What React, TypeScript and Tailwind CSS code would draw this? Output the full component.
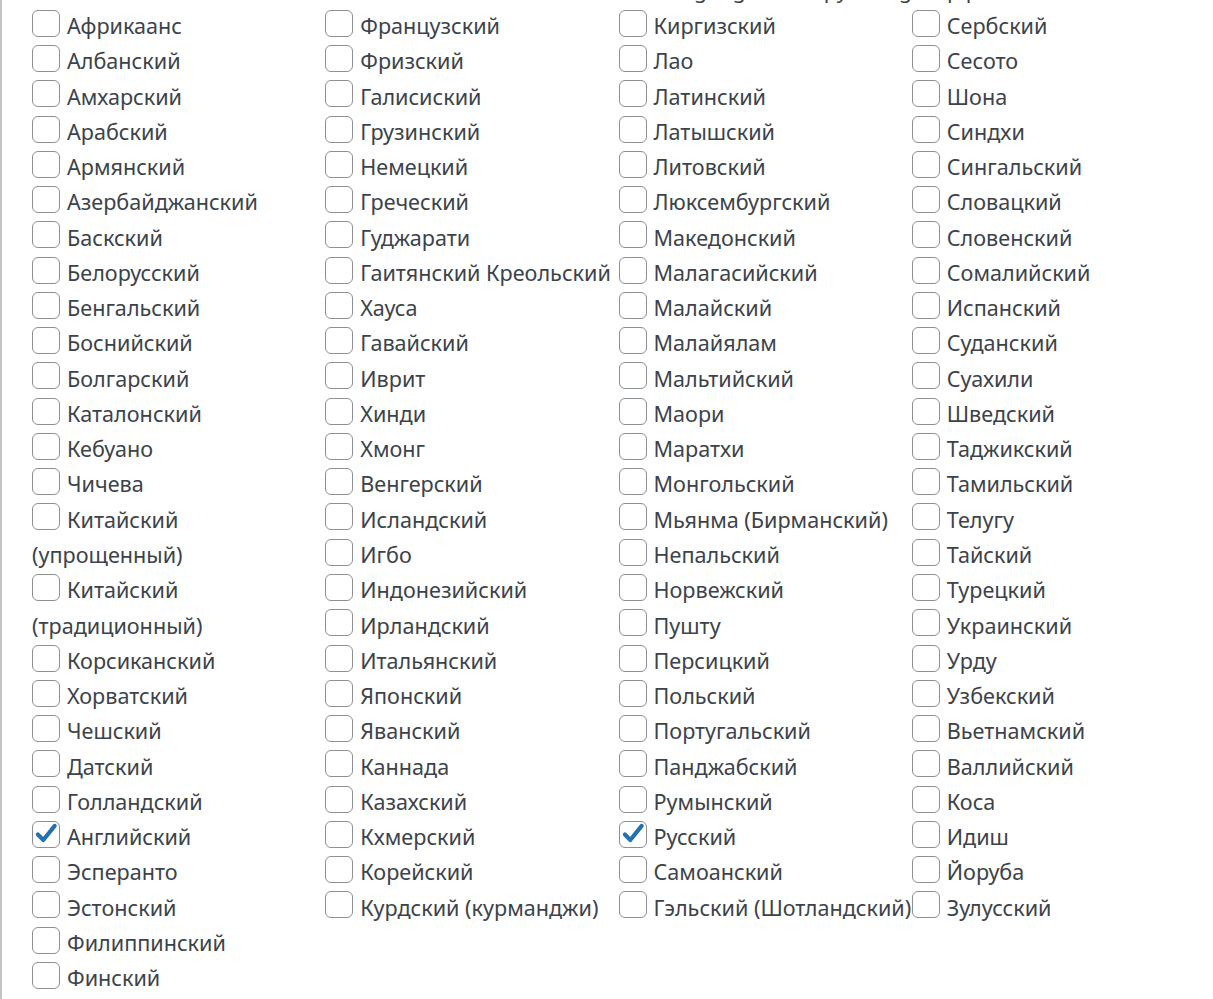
import React from "react";

const columns: { name: string; checked?: boolean }[][] = [
  [
    { name: "Африкаанс" },
    { name: "Албанский" },
    { name: "Амхарский" },
    { name: "Арабский" },
    { name: "Армянский" },
    { name: "Азербайджанский" },
    { name: "Баскский" },
    { name: "Белорусский" },
    { name: "Бенгальский" },
    { name: "Боснийский" },
    { name: "Болгарский" },
    { name: "Каталонский" },
    { name: "Кебуано" },
    { name: "Чичева" },
    { name: "Китайский (упрощенный)" },
    { name: "Китайский (традиционный)" },
    { name: "Корсиканский" },
    { name: "Хорватский" },
    { name: "Чешский" },
    { name: "Датский" },
    { name: "Голландский" },
    { name: "Английский", checked: true },
    { name: "Эсперанто" },
    { name: "Эстонский" },
    { name: "Филиппинский" },
    { name: "Финский" },
  ],
  [
    { name: "Французский" },
    { name: "Фризский" },
    { name: "Галисиский" },
    { name: "Грузинский" },
    { name: "Немецкий" },
    { name: "Греческий" },
    { name: "Гуджарати" },
    { name: "Гаитянский Креольский" },
    { name: "Хауса" },
    { name: "Гавайский" },
    { name: "Иврит" },
    { name: "Хинди" },
    { name: "Хмонг" },
    { name: "Венгерский" },
    { name: "Исландский" },
    { name: "Игбо" },
    { name: "Индонезийский" },
    { name: "Ирландский" },
    { name: "Итальянский" },
    { name: "Японский" },
    { name: "Яванский" },
    { name: "Каннада" },
    { name: "Казахский" },
    { name: "Кхмерский" },
    { name: "Корейский" },
    { name: "Курдский (курманджи)" },
  ],
  [
    { name: "Киргизский" },
    { name: "Лао" },
    { name: "Латинский" },
    { name: "Латышский" },
    { name: "Литовский" },
    { name: "Люксембургский" },
    { name: "Македонский" },
    { name: "Малагасийский" },
    { name: "Малайский" },
    { name: "Малайялам" },
    { name: "Мальтийский" },
    { name: "Маори" },
    { name: "Маратхи" },
    { name: "Монгольский" },
    { name: "Мьянма (Бирманский)" },
    { name: "Непальский" },
    { name: "Норвежский" },
    { name: "Пушту" },
    { name: "Персицкий" },
    { name: "Польский" },
    { name: "Португальский" },
    { name: "Панджабский" },
    { name: "Румынский" },
    { name: "Русский", checked: true },
    { name: "Самоанский" },
    { name: "Гэльский (Шотландский)" },
  ],
  [
    { name: "Сербский" },
    { name: "Сесото" },
    { name: "Шона" },
    { name: "Синдхи" },
    { name: "Сингальский" },
    { name: "Словацкий" },
    { name: "Словенский" },
    { name: "Сомалийский" },
    { name: "Испанский" },
    { name: "Суданский" },
    { name: "Суахили" },
    { name: "Шведский" },
    { name: "Таджикский" },
    { name: "Тамильский" },
    { name: "Телугу" },
    { name: "Тайский" },
    { name: "Турецкий" },
    { name: "Украинский" },
    { name: "Урду" },
    { name: "Узбекский" },
    { name: "Вьетнамский" },
    { name: "Валлийский" },
    { name: "Коса" },
    { name: "Идиш" },
    { name: "Йоруба" },
    { name: "Зулусский" },
  ],
];

const CheckBox = ({ checked }: { checked?: boolean }) => (
  <span className="relative -mt-[10px] mr-[7px] inline-block h-[27px] w-[28px] rounded-[6px] border border-[#8c8f94] bg-white align-middle">
    {checked && (
      <svg viewBox="0 0 24 24" className="absolute left-[0px] top-[-1px] h-[26px] w-[26px]">
        <path
          d="M4.5 12.5l5 5L20 4.5"
          fill="none"
          stroke="#2271b1"
          strokeWidth="3.8"
          strokeLinecap="round"
          strokeLinejoin="round"
        />
      </svg>
    )}
  </span>
);

export default function App() {
  return (
    <div
      className="min-h-[999px] border-l-2 border-[#c3c4c7] bg-white text-[#3c434a]"
      style={{ fontFamily: '"Noto Sans", "Open Sans", sans-serif' }}
    >
      <div className="h-[8px] overflow-hidden pl-[655px] text-[21.6px] leading-[35px] whitespace-nowrap">
        <div className="-mt-[28px]">Languages to copy into group p</div>
      </div>
      <div className="grid w-[1203px] grid-cols-4 pl-[30px] text-[21.6px] leading-[35.26px]">
        {columns.map((col, i) => (
          <div key={i} className="flex flex-col">
            {col.map((item) => (
              <label key={item.name} className="block">
                <CheckBox checked={item.checked} />
                {item.name}
              </label>
            ))}
          </div>
        ))}
      </div>
    </div>
  );
}
